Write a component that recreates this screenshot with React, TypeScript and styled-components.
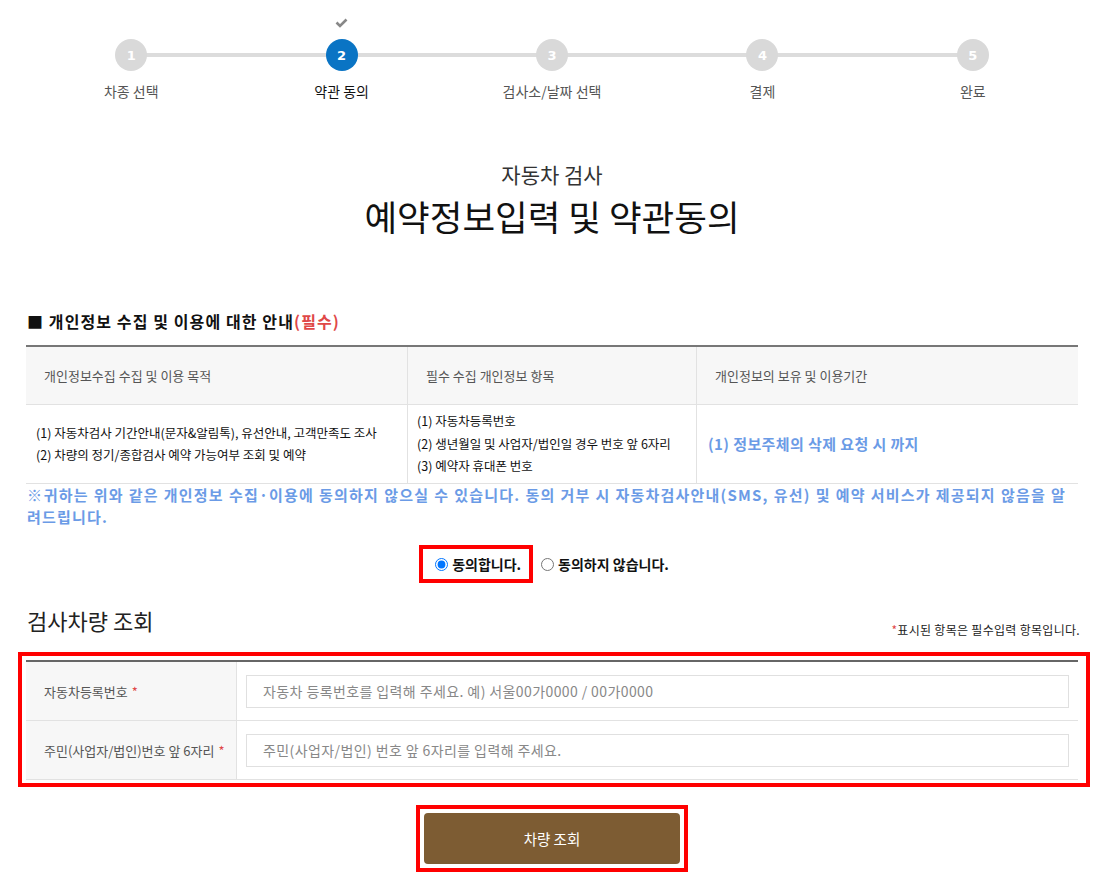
import styled, { createGlobalStyle } from 'styled-components';

const GlobalStyle = createGlobalStyle`
  body {
    margin: 0;
    background: #fff;
    font-family: "Noto Sans CJK KR", "Noto Sans", sans-serif;
    color: #222;
  }
  * { box-sizing: border-box; }
`;

const Page = styled.div`
  width: 1052px;
  margin-left: 26px;
  padding-bottom: 20px;
`;

const Stepper = styled.ol`
  list-style: none;
  margin: 0;
  padding: 18px 0 0;
  display: flex;
`;

const Step = styled.li<{ $first?: boolean }>`
  flex: 1;
  position: relative;
  display: flex;
  flex-direction: column;
  align-items: center;
  &::before {
    content: '';
    display: ${(p) => (p.$first ? 'none' : 'block')};
    position: absolute;
    top: 35px;
    left: -50%;
    right: 50%;
    height: 4px;
    background: #dcdcdc;
  }
`;

const CheckSlot = styled.div`
  height: 21px;
  display: flex;
  align-items: flex-start;
  justify-content: center;
`;

const Circle = styled.span<{ $active?: boolean }>`
  position: relative;
  z-index: 1;
  width: 32px;
  height: 32px;
  border-radius: 50%;
  background: ${(p) => (p.$active ? '#0a74c4' : '#d9d9d9')};
  color: #fff;
  font-family: Tahoma, "DejaVu Sans", sans-serif;
  font-weight: bold;
  font-size: 13px;
  display: flex;
  align-items: center;
  justify-content: center;
`;

const StepLabel = styled.span<{ $active?: boolean }>`
  margin-top: 9px;
  font-size: 14px;
  line-height: 22px;
  color: ${(p) => (p.$active ? '#111' : '#555')};
`;

const TitleBlock = styled.div`
  margin-top: 57px;
  text-align: center;
`;

const SubTitle = styled.div`
  font-size: 21px;
  line-height: 30px;
  color: #333;
`;

const MainTitle = styled.h1`
  margin: 5px 0 0;
  font-size: 35.5px;
  font-weight: 400;
  line-height: 44px;
  color: #111;
`;

const SectionHead = styled.h2`
  margin: 72px 0 0;
  padding-left: 1px;
  font-size: 16px;
  line-height: 22px;
  letter-spacing: 1.1px;
  font-weight: bold;
  color: #111;
  span { color: #e04848; }
`;

const InfoTable = styled.div`
  margin-top: 13px;
  border-top: 2px solid #777;
  border-bottom: 1px solid #e2e2e2;
  display: grid;
  grid-template-columns: 381px 289px 1fr;
`;

const HeadCell = styled.div`
  height: 58px;
  background: #f7f7f7;
  border-bottom: 1px solid #e2e2e2;
  border-left: 1px solid #e2e2e2;
  &:first-child { border-left: 0; }
  padding-left: 18px;
  display: flex;
  align-items: center;
  font-size: 13px;
  color: #555;
`;

const BodyCell = styled.div<{ $center?: boolean }>`
  height: 78px;
  border-left: 1px solid #e2e2e2;
  &:nth-child(4) { border-left: 0; }
  padding-left: ${(p) => (p.$center ? '9px' : '10px')};
  display: flex;
  flex-direction: column;
  justify-content: center;
  font-size: 12.5px;
  line-height: 22.5px;
  color: #111;
`;

const Period = styled.div`
  padding-left: 1px;
  font-size: 15px;
  font-weight: bold;
  letter-spacing: 0.4px;
  color: #6b9be6;
`;

const Notice = styled.p`
  margin: 0;
  padding: 0 12px 0 1px;
  font-size: 15px;
  line-height: 22px;
  font-weight: bold;
  color: #6b9be6;
  text-align: justify;
  letter-spacing: 1.2px;
`;

const AgreeRow = styled.div`
  margin-top: 17px;
  display: flex;
  justify-content: center;
  align-items: center;
  padding-right: 16px;
`;

const Highlight = styled.div<{ $pad?: string }>`
  border: 4px solid #ff0000;
  padding: ${(p) => p.$pad || '4px'};
`;

const RadioLabel = styled.label`
  display: flex;
  align-items: center;
  gap: 2px;
  font-size: 14px;
  font-weight: bold;
  color: #111;
  input {
    margin: 0 2px 0 0;
    width: 13px;
    height: 13px;
  }
`;

const LookupHead = styled.div`
  margin-top: 22px;
  display: flex;
  justify-content: space-between;
  align-items: flex-end;
`;

const LookupTitle = styled.h3`
  margin: 0;
  padding-left: 1px;
  font-size: 22px;
  font-weight: 400;
  line-height: 30px;
  color: #222;
`;

const RequiredNote = styled.span`
  font-size: 12px;
  letter-spacing: 0.3px;
  color: #222;
  margin-right: -2px;
  margin-bottom: -3px;
  b { color: #e04848; font-weight: normal; }
`;

const FormBox = styled(Highlight)`
  margin: 17px -12px 0 -8px;
`;

const FormTable = styled.div`
  border-top: 2px solid #666;
`;

const FormRow = styled.div`
  display: grid;
  grid-template-columns: 211px 1fr;
  height: 59px;
  border-bottom: 1px solid #e2e2e2;
`;

const FormLabel = styled.div`
  background: #f7f7f7;
  border-right: 1px solid #e2e2e2;
  padding-left: 18px;
  display: flex;
  align-items: center;
  font-size: 13px;
  color: #555;
  b { color: #e04848; font-weight: normal; margin-left: 4px; }
`;

const FieldCell = styled.div`
  display: flex;
  align-items: center;
  padding: 0 9px;
`;

const TextInput = styled.input`
  width: 100%;
  height: 33px;
  border: 1px solid #e0e0e0;
  padding: 0 16px;
  font-family: inherit;
  font-size: 14px;
  letter-spacing: 0.4px;
  color: #333;
  outline: none;
  &::placeholder { color: #888; }
`;

const ButtonRow = styled.div`
  margin-top: 18px;
  display: flex;
  justify-content: center;
`;

const SearchButton = styled.button`
  width: 256px;
  height: 51px;
  border: 0;
  border-radius: 4px;
  background: #7d5c33;
  color: #fff;
  font-family: inherit;
  font-size: 14.5px;
  cursor: pointer;
`;

const steps = ['차종 선택', '약관 동의', '검사소/날짜 선택', '결제', '완료'];
const current = 1;

const CheckMark = () => (
  <svg width="13" height="10" viewBox="0 0 13 10">
    <path d="M1.5 4.5 L5 8 L11.5 1.5" fill="none" stroke="#888" strokeWidth="2.6" />
  </svg>
);

const App = () => {
  return (
    <Page>
      <GlobalStyle />
      <Stepper>
        {steps.map((label, i) => (
          <Step key={label} $first={i === 0}>
            <CheckSlot>{i === current && <CheckMark />}</CheckSlot>
            <Circle $active={i === current}>{i + 1}</Circle>
            <StepLabel $active={i === current}>{label}</StepLabel>
          </Step>
        ))}
      </Stepper>

      <TitleBlock>
        <SubTitle>자동차 검사</SubTitle>
        <MainTitle>예약정보입력 및 약관동의</MainTitle>
      </TitleBlock>

      <SectionHead>■ 개인정보 수집 및 이용에 대한 안내<span>(필수)</span></SectionHead>
      <InfoTable>
        <HeadCell>개인정보수집 수집 및 이용 목적</HeadCell>
        <HeadCell>필수 수집 개인정보 항목</HeadCell>
        <HeadCell>개인정보의 보유 및 이용기간</HeadCell>
        <BodyCell>
          <div>(1) 자동차검사 기간안내(문자&amp;알림톡), 유선안내, 고객만족도 조사</div>
          <div>(2) 차량의 정기/종합검사 예약 가능여부 조회 및 예약</div>
        </BodyCell>
        <BodyCell $center>
          <div>(1) 자동차등록번호</div>
          <div>(2) 생년월일 및 사업자/법인일 경우 번호 앞 6자리</div>
          <div>(3) 예약자 휴대폰 번호</div>
        </BodyCell>
        <BodyCell>
          <Period>(1) 정보주체의 삭제 요청 시 까지</Period>
        </BodyCell>
      </InfoTable>
      <Notice>
        ※귀하는 위와 같은 개인정보 수집·이용에 동의하지 않으실 수 있습니다. 동의 거부 시 자동차검사안내(SMS, 유선) 및 예약 서비스가 제공되지 않음을 알려드립니다.
      </Notice>

      <AgreeRow>
        <Highlight $pad="5px 8px 5px 12px">
          <RadioLabel>
            <input type="radio" name="agree" defaultChecked />
            동의합니다.
          </RadioLabel>
        </Highlight>
        <RadioLabel style={{ marginLeft: 8 }}>
          <input type="radio" name="agree" />
          동의하지 않습니다.
        </RadioLabel>
      </AgreeRow>

      <LookupHead>
        <LookupTitle>검사차량 조회</LookupTitle>
        <RequiredNote><b>*</b>표시된 항목은 필수입력 항목입니다.</RequiredNote>
      </LookupHead>

      <FormBox $pad="4px 8px 3px 4px">
        <FormTable>
          <FormRow>
            <FormLabel>자동차등록번호<b>*</b></FormLabel>
            <FieldCell>
              <TextInput placeholder="자동차 등록번호를 입력해 주세요. 예) 서울00가0000 / 00가0000" />
            </FieldCell>
          </FormRow>
          <FormRow>
            <FormLabel>주민(사업자/법인)번호 앞 6자리<b>*</b></FormLabel>
            <FieldCell>
              <TextInput placeholder="주민(사업자/법인) 번호 앞 6자리를 입력해 주세요." />
            </FieldCell>
          </FormRow>
        </FormTable>
      </FormBox>

      <ButtonRow>
        <Highlight>
          <SearchButton>차량 조회</SearchButton>
        </Highlight>
      </ButtonRow>
    </Page>
  );
};

export default App;
